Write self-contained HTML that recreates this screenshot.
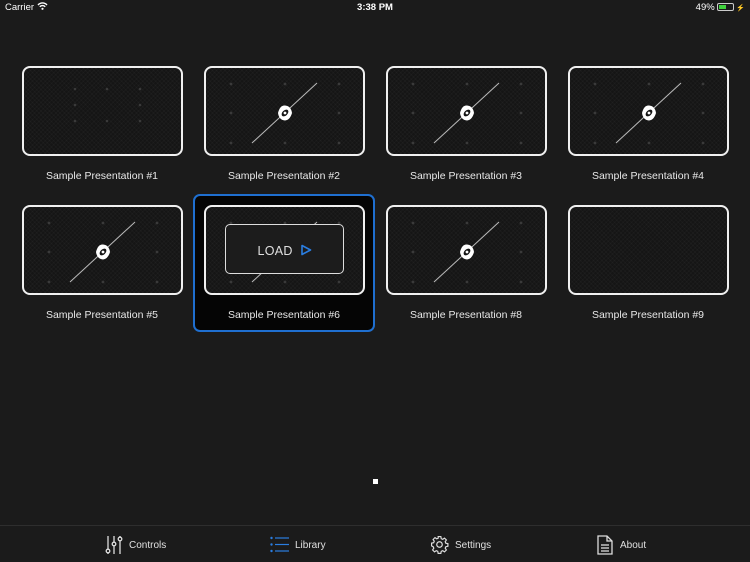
<!DOCTYPE html>
<html><head><meta charset="utf-8"><style>
*{margin:0;padding:0;box-sizing:border-box}
body{width:750px;height:562px;background:#1b1b1b;position:relative;overflow:hidden;font-family:"Liberation Sans",sans-serif;color:#e6e6e6}
.sb{position:absolute;top:0;height:16px;font-size:9.5px;line-height:16px;color:#fff}
.card{position:absolute;width:161px;height:90px;border:2px solid #f0f0f0;border-radius:8px;background:#151515;overflow:hidden;
background-image:repeating-linear-gradient(45deg,rgba(255,255,255,.025) 0 1px,transparent 1px 3px),repeating-linear-gradient(-45deg,rgba(255,255,255,.025) 0 1px,transparent 1px 3px)}
.card svg.bg{position:absolute;left:-2px;top:-2px}
.lbl{position:absolute;width:182px;text-align:center;font-size:10.5px;color:#e8e8e8}
.sel{position:absolute;left:193px;top:194px;width:182px;height:138px;border:2px solid #1f6fd0;border-radius:7px;background:#050505}
.tab{position:absolute;top:539px;font-size:10px;color:#e0e0e0;line-height:14px}
</style></head><body>
<div class="sb" style="left:5px">Carrier <svg width="11" height="8" viewBox="0 0 11 8"><path d="M1 3 A6 6 0 0 1 10 3" stroke="#fff" stroke-width="1.4" fill="none"/><path d="M2.8 4.8 A3.5 3.5 0 0 1 8.2 4.8" stroke="#fff" stroke-width="1.4" fill="none"/><circle cx="5.5" cy="6.8" r="1.1" fill="#fff"/></svg></div>
<div class="sb" style="left:0;width:750px;text-align:center;font-weight:bold;font-size:9.5px">3:38 PM</div>
<div class="sb" style="right:5px">49% <span style="display:inline-block;width:17px;height:8px;border:1px solid #ccc;border-radius:2px;vertical-align:-1px;position:relative"><span style="position:absolute;left:1px;top:1px;width:7px;height:4px;background:#3fd23c"></span></span><span style="font-size:7px"> ⚡</span></div>

<div class="sel"></div>

<div class="card" style="left:22px;top:66px"><svg class="bg" width="161" height="90"><g fill="#3a3a3a"><circle cx="53" cy="23" r="1.3"/><circle cx="85" cy="23" r="1.3"/><circle cx="118" cy="23" r="1.3"/><circle cx="53" cy="39" r="1.3"/><circle cx="118" cy="39" r="1.3"/><circle cx="53" cy="55" r="1.3"/><circle cx="85" cy="55" r="1.3"/><circle cx="118" cy="55" r="1.3"/></g></svg></div>
<div class="lbl" style="left:11px;top:170px">Sample Presentation #1</div>

<svg width="0" height="0" style="position:absolute"><defs><g id="pres"><g fill="#3a3a3a"><circle cx="27" cy="18" r="1.4"/><circle cx="81" cy="18" r="1.4"/><circle cx="135" cy="18" r="1.4"/><circle cx="27" cy="47" r="1.4"/><circle cx="135" cy="47" r="1.4"/><circle cx="27" cy="77" r="1.4"/><circle cx="81" cy="77" r="1.4"/><circle cx="135" cy="77" r="1.4"/></g><line x1="48" y1="77" x2="113" y2="17" stroke="#bbb" stroke-width="1"/><path d="M74 47 Q76 39 81 39.5 Q87 40 88 47 Q86 54 81 54.5 Q75 54 74 47Z" fill="#fff"/><ellipse cx="81" cy="47" rx="4" ry="2.6" fill="#151515" transform="rotate(-45 81 47)"/><circle cx="81" cy="47" r="1.4" fill="#fff"/></g></defs></svg>

<div class="card" style="left:204px;top:66px"><svg class="bg" width="161" height="90"><use href="#pres"/></svg></div>
<div class="lbl" style="left:193px;top:170px">Sample Presentation #2</div>
<div class="card" style="left:386px;top:66px"><svg class="bg" width="161" height="90"><use href="#pres"/></svg></div>
<div class="lbl" style="left:375px;top:170px">Sample Presentation #3</div>
<div class="card" style="left:568px;top:66px"><svg class="bg" width="161" height="90"><use href="#pres"/></svg></div>
<div class="lbl" style="left:557px;top:170px">Sample Presentation #4</div>

<div class="card" style="left:22px;top:205px"><svg class="bg" width="161" height="90"><use href="#pres"/></svg></div>
<div class="lbl" style="left:11px;top:309px">Sample Presentation #5</div>
<div class="card" style="left:204px;top:205px"><svg class="bg" width="161" height="90"><use href="#pres"/></svg>
<div style="position:absolute;left:19px;top:17px;width:119px;height:50px;border:1.5px solid #ddd;border-radius:5px;background:#1c1c1c;text-align:center;line-height:47px;padding-top:3px;font-size:12.5px;color:#e0e0e0;letter-spacing:.3px;white-space:nowrap">LOAD <svg width="12" height="12" viewBox="0 0 12 12" style="vertical-align:-1px;margin-left:3px"><path d="M2 1.5 L10.5 6 L2 10.5 Z" stroke="#2a7de0" stroke-width="1.6" fill="none" stroke-linejoin="round"/></svg></div></div>
<div class="lbl" style="left:193px;top:309px">Sample Presentation #6</div>
<div class="card" style="left:386px;top:205px"><svg class="bg" width="161" height="90"><use href="#pres"/></svg></div>
<div class="lbl" style="left:375px;top:309px">Sample Presentation #8</div>
<div class="card" style="left:568px;top:205px"></div>
<div class="lbl" style="left:557px;top:309px">Sample Presentation #9</div>

<div style="position:absolute;left:373px;top:479px;width:5px;height:5px;background:#fff"></div>

<div style="position:absolute;left:0;top:525px;width:750px;height:1px;background:#2e2e2e"></div>
<svg style="position:absolute;left:104px;top:535px" width="20" height="20" viewBox="0 0 20 20" fill="none" stroke="#ddd" stroke-width="1.3"><line x1="4" y1="1" x2="4" y2="14"/><circle cx="4" cy="16" r="1.8"/><line x1="4" y1="18" x2="4" y2="19"/><line x1="10" y1="1" x2="10" y2="7"/><circle cx="10" cy="9" r="1.8"/><line x1="10" y1="11" x2="10" y2="19"/><line x1="16" y1="1" x2="16" y2="2"/><circle cx="16" cy="4" r="1.8"/><line x1="16" y1="6" x2="16" y2="19"/></svg>
<div class="tab" style="left:129px">Controls</div>
<svg style="position:absolute;left:270px;top:536px" width="20" height="17" viewBox="0 0 20 17" fill="#2a7de0"><circle cx="1.5" cy="2" r="1.2"/><circle cx="1.5" cy="8.5" r="1.2"/><circle cx="1.5" cy="15" r="1.2"/><rect x="5" y="1.4" width="14" height="1.2"/><rect x="5" y="7.9" width="14" height="1.2"/><rect x="5" y="14.4" width="14" height="1.2"/></svg>
<div class="tab" style="left:295px">Library</div>
<svg style="position:absolute;left:430px;top:535px" width="19" height="19" viewBox="0 0 24 24" fill="none" stroke="#ddd" stroke-width="1.5"><circle cx="12" cy="12" r="3.5"/><path d="M10.3 2h3.4l.5 2.6 1.9.8 2.2-1.5 2.4 2.4-1.5 2.2.8 1.9 2.6.5v3.4l-2.6.5-.8 1.9 1.5 2.2-2.4 2.4-2.2-1.5-1.9.8-.5 2.6h-3.4l-.5-2.6-1.9-.8-2.2 1.5-2.4-2.4 1.5-2.2-.8-1.9L2 13.7v-3.4l2.6-.5.8-1.9-1.5-2.2 2.4-2.4 2.2 1.5 1.9-.8z"/></svg>
<div class="tab" style="left:455px">Settings</div>
<svg style="position:absolute;left:597px;top:535px" width="16" height="20" viewBox="0 0 16 20" fill="none" stroke="#ddd" stroke-width="1.3"><path d="M1 1h9l5 5v13H1z"/><path d="M10 1v5h5"/><line x1="4" y1="10" x2="12" y2="10"/><line x1="4" y1="13" x2="12" y2="13"/><line x1="4" y1="16" x2="12" y2="16"/></svg>
<div class="tab" style="left:620px">About</div>
</body></html>
